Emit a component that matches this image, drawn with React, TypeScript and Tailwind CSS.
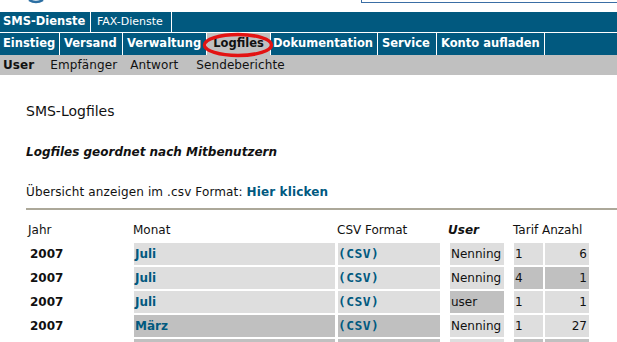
import React from "react";

const LIGHT = "bg-[#dedede]";
const DARK = "bg-[#c0c0c0]";

type Row = {
  year: string;
  month: string;
  user: string;
  tarif: string;
  count: string;
  m: string;
  u: string;
  t: string;
};

const rows: Row[] = [
  { year: "2007", month: "Juli", user: "Nenning", tarif: "1", count: "6", m: LIGHT, u: LIGHT, t: LIGHT },
  { year: "2007", month: "Juli", user: "Nenning", tarif: "4", count: "1", m: LIGHT, u: LIGHT, t: DARK },
  { year: "2007", month: "Juli", user: "user", tarif: "1", count: "1", m: LIGHT, u: DARK, t: LIGHT },
  { year: "2007", month: "März", user: "Nenning", tarif: "1", count: "27", m: DARK, u: LIGHT, t: LIGHT },
  // only the top edge of this row is on screen
  { year: "", month: "", user: "", tarif: "", count: "", m: DARK, u: LIGHT, t: DARK },
];

const mainTabs = [
  { label: "Einstieg", w: "w-[60px]", pl: "pl-[3px]" },
  { label: "Versand", w: "w-[63px]", pl: "pl-[4px]" },
  { label: "Verwaltung", w: "w-[84px]", pl: "pl-[4px]" },
  { label: "Logfiles", w: "w-[64px]", pl: "pl-0", active: true },
  { label: "Dokumentation", w: "w-[107px]", pl: "pl-[2px]" },
  { label: "Service", w: "w-[59px]", pl: "pl-[4px]" },
  { label: "Konto aufladen", w: "w-[108px]", pl: "pl-[4px]" },
];

export default function App() {
  return (
    <div
      className="relative w-full h-[342px] overflow-hidden bg-white text-[12px] text-[#111]"
      style={{ fontFamily: '"DejaVu Sans", Verdana, sans-serif' }}
    >
      {/* header strip with logo edge */}
      <div className="relative h-[12px]">
        <svg className="absolute left-[28px] top-0" width="16" height="4" viewBox="0 0 16 4">
          <path d="M1 0 Q8 4 15 0" stroke="#2c6fa3" strokeWidth="2.5" fill="none" />
        </svg>
        <div className="absolute left-[361px] top-0 w-[260px] h-[3px] border-l border-b border-[#3a6ea5]" />
      </div>

      {/* service tabs */}
      <div className="flex h-[20px] bg-[#01597f] text-white">
        <div className="w-[91px] h-full flex items-center pl-[3px] font-bold text-[11.5px] border-r border-white">SMS-Dienste</div>
        <div className="w-[81px] h-full flex items-center pl-[6px] text-[11px] border-r border-white">FAX-Dienste</div>
      </div>
      <div className="h-px bg-white" />

      {/* main tabs */}
      <div className="relative flex h-[22px] bg-[#01597f] text-white font-bold text-[11.5px]">
        {mainTabs.map((t) => (
          <div
            key={t.label}
            className={`${t.w} ${t.pl} h-full flex items-center border-r border-white ${
              t.active ? "bg-[#c0c0c0] text-[#111] justify-center" : ""
            }`}
          >
            {t.label}
          </div>
        ))}
        <svg className="absolute left-[202px] top-[-1px]" width="72" height="26" viewBox="0 0 72 26">
          <ellipse cx="36" cy="13" rx="33.5" ry="10.5" stroke="#e31313" strokeWidth="3.5" fill="none" />
        </svg>
      </div>

      {/* sub tabs */}
      <div className="flex items-center h-[20px] bg-[#c0c0c0] pl-[3px] text-[#111] tracking-[0.1px]">
        <span className="font-bold">User</span>
        <span className="ml-[16px]">Empfänger</span>
        <span className="ml-[13px]">Antwort</span>
        <span className="ml-[18px]">Sendeberichte</span>
      </div>

      {/* content */}
      <div className="pl-[26px]">
        <h1 className="mt-[28px] text-[14px] leading-[17px] font-normal">SMS-Logfiles</h1>
        <p className="mt-[25px] font-bold italic leading-[15px]">Logfiles geordnet nach Mitbenutzern</p>
        <p className="mt-[25px] leading-[15px] tracking-[0.13px]">
          Übersicht anzeigen im .csv Format:{" "}
          <a className="font-bold text-[#01597f]">Hier klicken</a>
        </p>
        <div className="mt-[8px] h-[2px] bg-[#aca899]" />

        <div className="mt-[9px] flex flex-col gap-[2px]">
          <div className="flex h-[22px] items-center">
            <div className="w-[106px] pl-[2px]">Jahr</div>
            <div className="w-[204px] pl-px">Monat</div>
            <div className="w-[112px] pl-px">CSV Format</div>
            <div className="w-[64px] font-bold italic">User</div>
            <div className="w-[75px] pl-px">Tarif Anzahl</div>
          </div>
          {rows.map((r, i) => (
            <div key={i} className="flex h-[22px]">
              <div className="w-[104px] ml-[2px] flex items-center pl-[2px] font-bold">{r.year}</div>
              <div className={`w-[201px] ml-[2px] flex items-center pl-px font-bold text-[#01597f] ${r.m}`}>{r.month}</div>
              <div className={`w-[102px] ml-[3px] flex items-center font-bold text-[#01597f] ${r.m}`}>
                {r.year && (
                  <span style={{ fontFamily: '"DejaVu Sans Mono", monospace' }} className="text-[13px] tracking-[0.4px]">
                    (CSV)
                  </span>
                )}
              </div>
              <div className={`w-[54px] ml-[10px] flex items-center pl-px ${r.u}`}>{r.user}</div>
              <div className={`w-[29px] ml-[10px] flex items-center pl-px ${r.t}`}>{r.tarif}</div>
              <div className={`w-[44px] ml-[2px] flex items-center justify-end pr-[2px] ${r.t}`}>{r.count}</div>
            </div>
          ))}
        </div>
      </div>
    </div>
  );
}
